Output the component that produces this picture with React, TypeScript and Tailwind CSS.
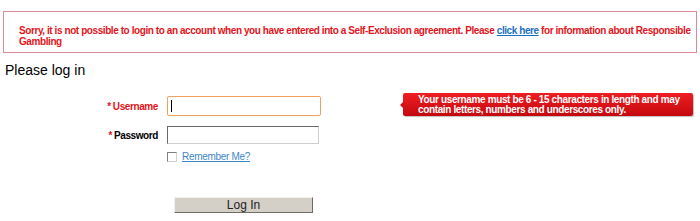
import React from "react";

export default function App() {
  return (
    <div className="h-[221px] w-[700px] overflow-hidden bg-white font-['Liberation_Sans',Arial,sans-serif] text-black">
      <div className="mx-[3px] mt-[11px] h-[42px] border border-[#d98a92] pl-[15px] pt-[13px]">
        <p className="whitespace-nowrap text-[10px] font-bold leading-[11px] tracking-[-0.42px] text-[#e3141b]">
          Sorry, it is not possible to login to an account when you have entered into a Self-Exclusion agreement. Please{" "}
          <a href="#" className="text-[#1a6fc0] underline">click here</a> for information about Responsible
          <br />
          Gambling
        </p>
      </div>

      <h1 className="ml-[5px] mt-[9px] text-[14px] leading-[16px]">Please log in</h1>

      <div className="mt-[18px] grid grid-cols-[158px_1fr] items-center gap-x-[9px]">
        <label className="text-right text-[10px] font-bold tracking-[-0.4px] text-[#e3141b]">
          <span className="mr-[2px]">*</span>Username
        </label>
        <div className="relative flex h-[20px] items-center">
          <input
            className="h-[20px] w-[154px] rounded-[2px] border-[1.5px] border-[#f0a060] bg-white px-[3px] text-[11px] outline-none"
            defaultValue=""
          />
          <span className="absolute left-[4px] top-[4px] h-[12px] w-px bg-black" />
          <div className="absolute left-[233px] top-[-3px] h-[23px] w-[293px]">
            <span className="absolute left-0 top-[8px] h-0 w-0 border-y-[4px] border-r-[4px] border-y-transparent border-r-[#d60f15]" />
            <div className="ml-[3px] h-full rounded-[2px] bg-gradient-to-b from-[#ef1d22] to-[#c4080d] pl-[15px] pt-[2px] text-[10px] font-bold leading-[9.5px] tracking-[-0.37px] text-white shadow-[1px_1px_1px_rgba(0,0,0,0.25)]">
              Your username must be 6 - 15 characters in length and may
              <br />
              contain letters, numbers and underscores only.
            </div>
          </div>
        </div>

        <label className="mt-[10px] text-right text-[10px] font-bold tracking-[-0.4px]">
          <span className="mr-[2px] text-[#e3141b]">*</span>Password
        </label>
        <input
          type="password"
          className="mt-[10px] h-[18px] w-[152px] border border-t-[#6a6a6a] border-l-[#6a6a6a] border-r-[#cfcfcf] border-b-[#cfcfcf] bg-white text-[11px] outline-none"
        />

        <div />
        <label className="mt-[7px] flex items-center gap-[5px]">
          <span className="h-[10px] w-[10px] border border-t-[#808080] border-l-[#808080] border-r-[#d0d0d0] border-b-[#d0d0d0] bg-white" />
          <a href="#" className="text-[10px] leading-[12px] tracking-[-0.3px] text-[#3d87c9] underline">
            Remember Me?
          </a>
        </label>
      </div>

      <div className="ml-[174px] mt-[34px]">
        <button className="flex h-[16px] w-[139px] items-center justify-center border border-t-[#f4f2ee] border-l-[#f4f2ee] border-r-[#6f6c66] border-b-[#6f6c66] bg-[#d4d0c8] text-[12px] leading-[12px] text-[#222]">
          Log In
        </button>
      </div>
    </div>
  );
}
